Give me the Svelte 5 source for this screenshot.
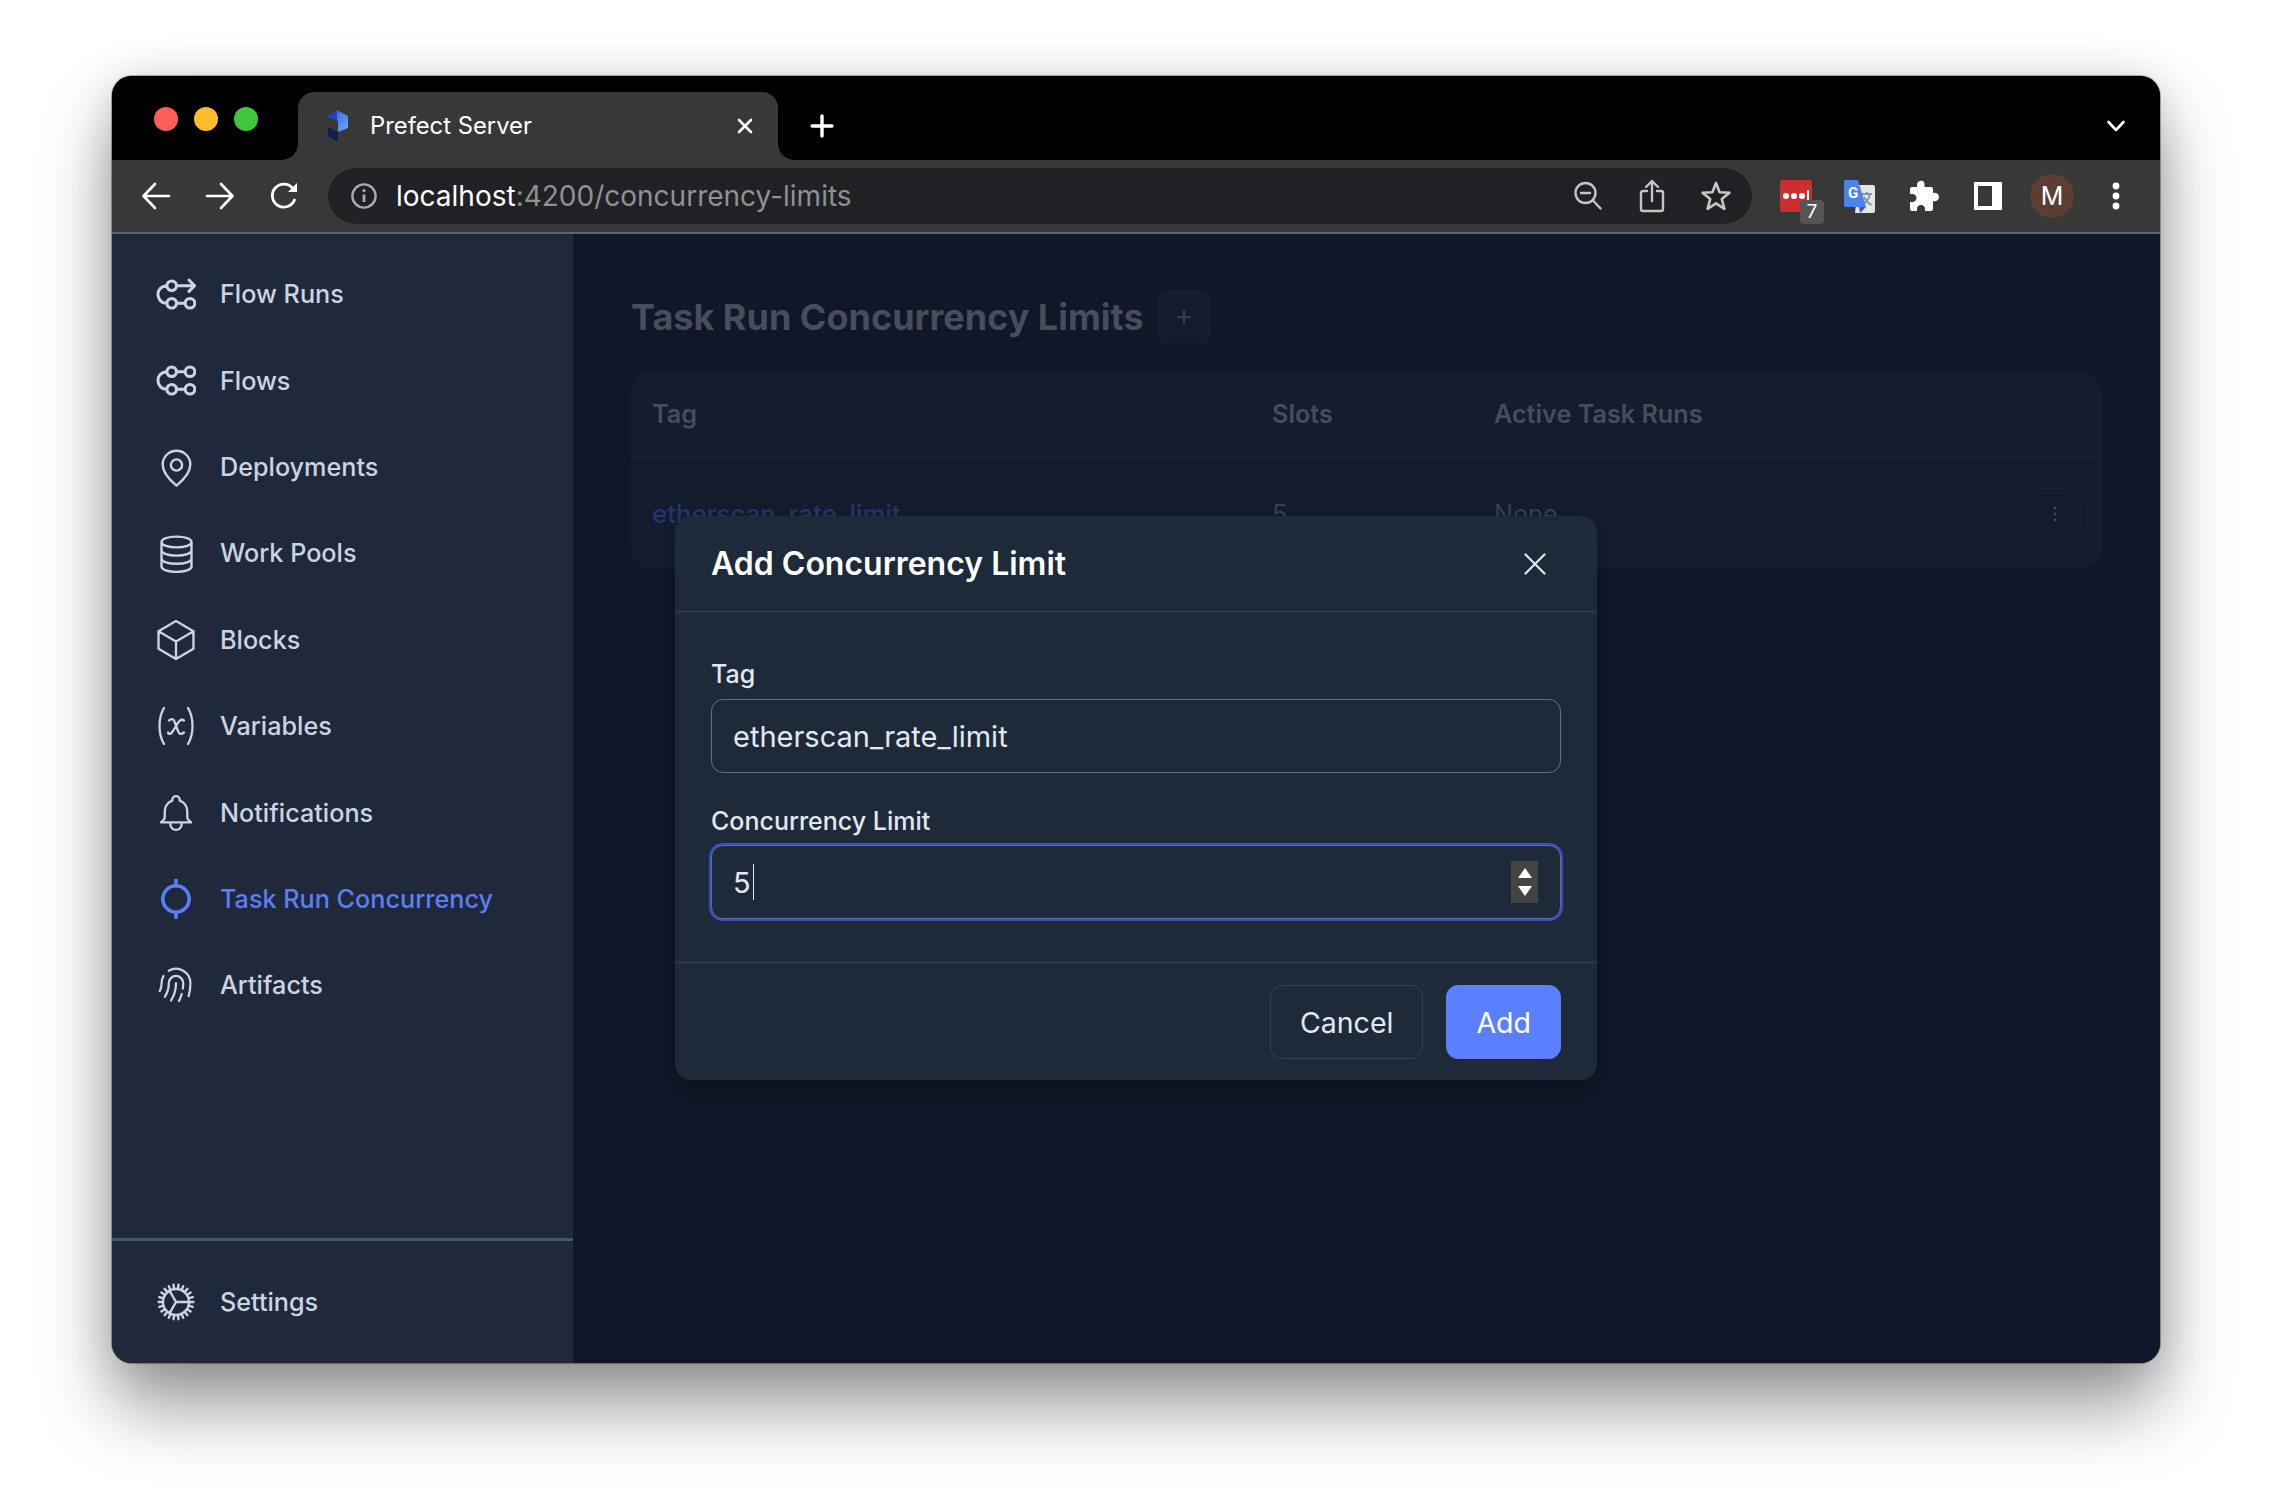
<script>
  const circ = (cx, cy, r) => `M${cx - r} ${cy}a${r} ${r} 0 1 0 ${r * 2} 0a${r} ${r} 0 1 0 ${-r * 2} 0`;

  // gear teeth around the settings icon
  let teeth = '';
  for (let i = 0; i < 22; i++) {
    const a = (i / 22) * Math.PI * 2;
    teeth += `M${20 + Math.cos(a) * 13} ${20 + Math.sin(a) * 13}L${20 + Math.cos(a) * 17.4} ${20 + Math.sin(a) * 17.4}`;
  }

  const navItems = [
    {
      label: 'Flow Runs', vb: '0 0 40 40', sw: 3,
      d: `${circ(15.7, 11.7, 4.8)}${circ(15.7, 29.3, 4.8)}${circ(34, 29.3, 4.8)}M10.900 11.700C-1 12-1 29 10.900 29.300M20.500 29.300H29.200M20.500 11.700H38M33 6l5.600 5.700-5.600 5.700`
    },
    {
      label: 'Flows', vb: '0 0 40 40', sw: 3,
      d: `${circ(15.7, 10.7, 4.8)}${circ(34, 10.7, 4.8)}${circ(15.7, 28.3, 4.8)}${circ(34, 28.3, 4.8)}M10.900 10.700C-1 11-1 28 10.900 28.300M20.500 10.700H29.200M20.500 28.300H29.200`
    },
    {
      label: 'Deployments', vb: '0 0 40 40', sw: 2.4,
      d: `M20.5 38.6C13 32.5 6.7 25.5 6.7 17.5A13.8 13.8 0 0 1 34.3 17.5C34.3 25.5 28 32.5 20.5 38.6Z${circ(20.5, 18, 5.6)}`
    },
    {
      label: 'Work Pools', vb: '0 0 40 40', sw: 2.4,
      d: `M5.5 9C5.5 5.8 12 3.6 20.5 3.6S35.5 5.8 35.5 9 29 14.4 20.5 14.4 5.5 12.2 5.5 9ZM5.5 9V33.5C5.5 36.7 12 38.9 20.5 38.9S35.5 36.7 35.5 33.5V9M5.5 17.2C5.5 20.4 12 22.6 20.5 22.6S35.5 20.4 35.5 17.2M5.5 25.4C5.5 28.6 12 30.8 20.5 30.8S35.5 28.6 35.5 25.4`
    },
    {
      label: 'Blocks', vb: '1.7 1.7 20.6 20.6', sw: 1.2,
      d: 'm21 7.5-9-5.25L3 7.5m18 0-9 5.25m9-5.25v9l-9 5.25M3 7.5l9 5.25M3 7.5v9l9 5.25m0-9v9'
    },
    {
      label: 'Variables', vb: '0 0 40 40', sw: 2.3,
      d: 'M8 2C2 12 2 28 8 38M32 2C38 12 38 28 32 38M13 14.5C16 12 18 13 19 17L22 25C23 28 25 29 28 26.5M28 14.5C25 12 22 16 20 20L17 25C15 28 13 29 12 26.5'
    },
    {
      label: 'Notifications', vb: '1.33 1.33 21.33 21.33', sw: 1.25,
      d: 'M15 17h5l-1.405-1.405A2.032 2.032 0 0118 14.158V11a6.002 6.002 0 00-4-5.659V5a2 2 0 10-4 0v.341C7.67 6.165 6 8.388 6 11v3.159c0 .538-.214 1.055-.595 1.436L4 17h5m6 0v1a3 3 0 11-6 0v-1m6 0H9'
    },
    {
      label: 'Task Run Concurrency', vb: '0 0 40 40', sw: 3.6, active: true,
      d: `${circ(20, 20, 13.2)}M20 1V7M20 33V39`
    },
    {
      label: 'Artifacts', vb: '0.9 0.9 22.2 22.2', sw: 1.25,
      d: 'M12 11c0 3.517-1.009 6.799-2.753 9.571m-3.44-2.04l.054-.09A13.916 13.916 0 008 11a4 4 0 118 0c0 1.017-.07 2.019-.203 3m-2.118 6.844A21.88 21.88 0 0015.171 17m3.839 1.132c.645-2.266.99-4.659.99-7.132A8 8 0 008 4.07M3 15.364c.64-1.319 1-2.8 1-4.364 0-1.457.39-2.823 1.07-4'
    }
  ];

  const settings = {
    label: 'Settings', vb: '0 0 40 40', sw: 2.4,
    d: `${circ(20, 20, 13)}${teeth}M20 20H33M20 20L13.5 8.7M20 20L13.5 31.3`
  };
</script>

{#snippet navRow(item)}
  <div class="nav-item" class:active={item.active}>
    <svg width="40" height="40" viewBox={item.vb} fill="none" stroke="currentColor" stroke-width={item.sw} stroke-linecap="round" stroke-linejoin="round">
      <path d={item.d} />
    </svg>
    <span>{item.label}</span>
  </div>
{/snippet}

<div class="window">
  <div class="tabstrip">
    <div class="lights">
      <i class="red"></i>
      <i class="yellow"></i>
      <i class="green"></i>
    </div>
    <div class="tab">
      <svg class="favicon" width="22" height="32" viewBox="0 0 22 32">
        <defs>
          <linearGradient id="pf" x1="0" y1="0" x2="1" y2="1">
            <stop offset="0" stop-color="#2b4fe0" />
            <stop offset="1" stop-color="#6fb0ff" />
          </linearGradient>
        </defs>
        <path d="M10 0L21 6V18L11 22V11L1 7Z" fill="url(#pf)" />
        <path d="M10 0V11L1 7Z" fill="#2440c8" />
        <path d="M1 17L11 22V32L1 26Z" fill="#10214f" />
      </svg>
      <span class="tab-title">Prefect Server</span>
      <svg class="tab-close" width="18" height="18" viewBox="0 0 18 18" stroke="#fff" stroke-width="2.6" stroke-linecap="round">
        <path d="M3 3L15 15M15 3L3 15" />
      </svg>
    </div>
    <svg class="new-tab" width="26" height="26" viewBox="0 0 26 26" stroke="#fff" stroke-width="3.4" stroke-linecap="round">
      <path d="M13 3V23M3 13H23" />
    </svg>
    <svg class="tab-menu" width="20" height="14" viewBox="0 0 20 14" fill="none" stroke="#fff" stroke-width="2.6" stroke-linecap="round" stroke-linejoin="round">
      <path d="M2.5 3L10 11L17.5 3" />
    </svg>
  </div>

  <div class="toolbar">
    <div class="tool">
      <svg width="30" height="28" viewBox="0 0 30 28" fill="none" stroke="#fff" stroke-width="2.6" stroke-linecap="round" stroke-linejoin="round">
        <path d="M28 14H3M14 2L2.5 14L14 26" />
      </svg>
    </div>
    <div class="tool">
      <svg width="30" height="28" viewBox="0 0 30 28" fill="none" stroke="#fff" stroke-width="2.6" stroke-linecap="round" stroke-linejoin="round">
        <path d="M2 14H27M16 2L27.5 14L16 26" />
      </svg>
    </div>
    <div class="tool">
      <svg width="30" height="30" viewBox="0 0 30 30" fill="none" stroke="#fff" stroke-width="2.8" stroke-linecap="round">
        <path d="M25.500 19A11.500 11.500 0 1 1 23.500 7" />
        <path d="M28 2V11H19Z" fill="#fff" stroke="none" />
      </svg>
    </div>
    <div class="omnibox">
      <svg class="info" width="28" height="28" viewBox="0 0 28 28" fill="none" stroke="#a8abae" stroke-width="2.4">
        <circle cx="14" cy="14" r="11.6" />
        <path d="M14 12.5V20" stroke-width="2.8" />
        <circle cx="14" cy="8.6" r="1.6" fill="#a8abae" stroke="none" />
      </svg>
      <div class="url"><span class="host">localhost</span>:4200/concurrency-limits</div>
      <div class="omni-icons">
        <div class="tool">
          <svg width="30" height="30" viewBox="0 0 30 30" fill="none" stroke="#c4c7c5" stroke-width="2.4" stroke-linecap="round">
            <circle cx="12.5" cy="12" r="10" />
            <path d="M8 12H17M20 19.5L27.5 27.5" />
          </svg>
        </div>
        <div class="tool">
          <svg width="26" height="34" viewBox="0 0 26 34" fill="none" stroke="#c4c7c5" stroke-width="2.4" stroke-linecap="round" stroke-linejoin="round">
            <path d="M8 12H4Q2 12 2 14V30Q2 32 4 32H22Q24 32 24 30V14Q24 12 22 12H18M13 22V2M7 8L13 2L19 8" />
          </svg>
        </div>
        <div class="tool">
          <svg width="32" height="32" viewBox="0 0 32 32" fill="none" stroke="#c4c7c5" stroke-width="2.6" stroke-linejoin="round">
            <path d="M16 3L19.6 12.3L29.5 12.8L21.8 19.1L24.4 28.8L16 23.4L7.6 28.8L10.2 19.1L2.5 12.8L12.4 12.3Z" />
          </svg>
        </div>
      </div>
    </div>
    <div class="tool ext">
      <div class="lastpass"><b></b><b></b><b></b><em></em></div>
      <div class="badge">7</div>
    </div>
    <div class="tool">
      <svg width="34" height="34" viewBox="0 0 34 34">
        <path d="M15 6H30Q32 6 32 8V32Q32 34 30 34H12Z" fill="#e3e5e7" />
        <path d="M19 15H29M24 13V15M27 15C26 20 22 24 19 26M21 18C23 22 26 25 29 26" stroke="#8a9499" stroke-width="1.8" fill="none" />
        <path d="M3 1H15L23 28H3Q1 28 1 26V3Q1 1 3 1Z" fill="#4c82ee" />
        <path d="M16 28H23L17 34Z" fill="#3557c4" />
        <text x="5" y="19" class="g">G</text>
      </svg>
    </div>
    <div class="tool">
      <svg width="30" height="32" viewBox="0 0 30 32" fill="#fff">
        <path d="M11 1C14 0 16 2 15.500 5.500V7H22Q24 7 24 9V13C27 12 30 14 30 17S27 22 24 21V29Q24 31 22 31H16V29C16 26 14 25 12 25S8 26 8 29V31H3Q1 31 1 29V22H3C6 22 7.500 20 7.500 18S6 14 3 14H1V9Q1 7 3 7H8V5C8 3 9 1.500 11 1Z" />
      </svg>
    </div>
    <div class="tool">
      <div class="panel"></div>
    </div>
    <div class="tool">
      <div class="avatar">M</div>
    </div>
    <div class="tool">
      <svg width="8" height="28" viewBox="0 0 8 28" fill="#fff">
        <circle cx="4" cy="4" r="3.4" />
        <circle cx="4" cy="14" r="3.4" />
        <circle cx="4" cy="24" r="3.4" />
      </svg>
    </div>
  </div>

  <div class="content">
    <aside class="sidebar">
      <nav class="nav">
        {#each navItems as item}
          {@render navRow(item)}
        {/each}
      </nav>
      <div class="nav-bottom">
        {@render navRow(settings)}
      </div>
    </aside>

    <main class="main">
      <header class="page-head">
        <h1>Task Run Concurrency Limits</h1>
        <div class="ghost-btn plus">
          <svg width="16" height="16" viewBox="0 0 16 16" stroke="#3e4656" stroke-width="1.6">
            <path d="M8 1V15M1 8H15" />
          </svg>
        </div>
      </header>
      <section class="table">
        <div class="row head">
          <div>Tag</div>
          <div>Slots</div>
          <div>Active Task Runs</div>
        </div>
        <div class="row body">
          <div class="link">etherscan_rate_limit</div>
          <div>5</div>
          <div>None</div>
          <div class="ghost-btn kebab">
            <svg width="4" height="16" viewBox="0 0 4 16" fill="#414857">
              <circle cx="2" cy="2" r="1.4" />
              <circle cx="2" cy="8" r="1.4" />
              <circle cx="2" cy="14" r="1.4" />
            </svg>
          </div>
        </div>
      </section>
    </main>

    <div class="modal">
      <div class="modal-head">
        <h2>Add Concurrency Limit</h2>
        <svg width="22" height="24" viewBox="0 0 22 24" stroke="#e2e8f0" stroke-width="2.2" stroke-linecap="round">
          <path d="M1.500 2.500L20.500 21.500M20.500 2.500L1.500 21.500" />
        </svg>
      </div>
      <div class="modal-body">
        <div class="field-label">Tag</div>
        <input class="input" type="text" readonly value="etherscan_rate_limit" />
        <div class="field-label second">Concurrency Limit</div>
        <div class="input focused">
          <span>5</span><span class="caret"></span>
          <div class="spinner">
            <svg width="14" height="10" viewBox="0 0 14 10" fill="#fff"><path d="M7 0L14 10H0Z" /></svg>
            <svg width="14" height="10" viewBox="0 0 14 10" fill="#fff"><path d="M0 0H14L7 10Z" /></svg>
          </div>
        </div>
      </div>
      <div class="modal-foot">
        <button class="btn">Cancel</button>
        <button class="btn primary">Add</button>
      </div>
    </div>
  </div>
</div>

<style>
  :global(body) {
    background: #fff;
    font-family: Inter, "Liberation Sans", sans-serif;
  }

  :global(#app) {
    padding-bottom: 149px;
  }

  .window {
    position: relative;
    box-sizing: border-box;
    width: 2048px;
    height: 1287px;
    margin: 76px 0 0 112px;
    border-radius: 20px;
    overflow: hidden;
    display: flex;
    flex-direction: column;
    background: #000;
    box-shadow: 0 0 0 1px rgba(0, 0, 0, 0.3), 0 44px 70px rgba(0, 0, 0, 0.4), 0 0 44px rgba(0, 0, 0, 0.14);
  }

  .tabstrip {
    height: 84px;
    box-sizing: border-box;
    padding: 16px 0 0 42px;
    display: flex;
    align-items: flex-start;
    background: #000;
  }

  .lights {
    display: flex;
    gap: 16px;
    margin-top: 15px;
  }

  .lights i {
    width: 24px;
    height: 24px;
    border-radius: 50%;
  }

  .red { background: #fc5f57; }
  .yellow { background: #fdbc2e; }
  .green { background: #3fc83f; }

  .tab {
    position: relative;
    width: 480px;
    height: 68px;
    margin-left: 40px;
    box-sizing: border-box;
    padding: 0 24px 0 29px;
    display: flex;
    align-items: center;
    background: #383838;
    border-radius: 16px 16px 0 0;
  }

  .tab::before,
  .tab::after {
    content: '';
    position: absolute;
    bottom: 0;
    width: 16px;
    height: 16px;
  }

  .tab::before {
    left: -16px;
    background: radial-gradient(circle at 0 0, transparent 15.500px, #383838 16px);
  }

  .tab::after {
    right: -16px;
    background: radial-gradient(circle at 100% 0, transparent 15.500px, #383838 16px);
  }

  .favicon {
    flex: none;
  }

  .tab-title {
    margin: -1px 0 0 21px;
    color: #fff;
    font-size: 23.800px;
  }

  .tab-close {
    margin-left: auto;
  }

  .new-tab {
    margin: 21px 0 0 31px;
  }

  .tab-menu {
    margin: 27px 34px 0 auto;
  }

  .toolbar {
    height: 72px;
    box-sizing: border-box;
    padding: 0 12px;
    display: flex;
    align-items: center;
    background: #383838;
  }

  .tool {
    position: relative;
    flex: none;
    width: 64px;
    height: 56px;
    display: flex;
    align-items: center;
    justify-content: center;
  }

  .omnibox {
    flex: none;
    width: 1424px;
    height: 56px;
    margin: 0 12px;
    box-sizing: border-box;
    padding: 0 4px 0 22px;
    display: flex;
    align-items: center;
    border-radius: 28px;
    background: #202124;
  }

  .url {
    margin-left: 18px;
    color: #8f9193;
    font-size: 28px;
  }

  .host {
    color: #fff;
  }

  .omni-icons {
    margin-left: auto;
    display: flex;
  }

  .lastpass {
    position: absolute;
    left: 16px;
    top: 12px;
    width: 32px;
    height: 32px;
    box-sizing: border-box;
    padding-left: 3px;
    display: flex;
    align-items: center;
    gap: 2px;
    border-radius: 3px;
    background: #cb2f2f;
  }

  .lastpass b {
    width: 6px;
    height: 6px;
    border-radius: 50%;
    background: #fff;
  }

  .lastpass em {
    width: 2px;
    height: 12px;
    background: #fff;
  }

  .badge {
    position: absolute;
    left: 36px;
    top: 32px;
    width: 24px;
    height: 24px;
    border-radius: 4px;
    background: #555;
    color: #fff;
    font-size: 19px;
    line-height: 24px;
    text-align: center;
  }

  .g {
    fill: #fff;
    font: 700 15px Roboto, sans-serif;
  }

  .panel {
    width: 28px;
    height: 28px;
    box-sizing: border-box;
    border: 4px solid #fff;
    border-right-width: 10px;
    background: #383838;
  }

  .avatar {
    width: 44px;
    height: 44px;
    border-radius: 50%;
    background: #5d3c32;
    color: #fff;
    font-size: 25px;
    line-height: 44px;
    text-align: center;
  }

  .content {
    position: relative;
    flex: 1;
    min-height: 0;
    display: flex;
    border-top: 2px solid #5f6266;
  }

  .sidebar {
    flex: none;
    width: 461px;
    display: flex;
    flex-direction: column;
    background: #20283b;
  }

  .nav {
    flex: 1;
    padding-top: 17px;
  }

  .nav-bottom {
    border-top: 3px solid #475569;
    padding: 18px 0 18px;
  }

  .nav-item {
    height: 86.400px;
    box-sizing: border-box;
    padding-left: 44px;
    display: flex;
    align-items: center;
    gap: 24px;
    color: #cbd5e1;
    font-size: 25.200px;
    font-weight: 500;
  }

  .nav-item svg {
    flex: none;
  }

  .nav-item.active {
    color: #5a7ff5;
  }

  .main {
    flex: 1;
    min-width: 0;
    box-sizing: border-box;
    padding: 57px 58px 0;
    background: #101729;
  }

  .page-head {
    display: flex;
    align-items: center;
    gap: 14px;
  }

  h1 {
    margin: 0;
    color: #474d5c;
    font-size: 36px;
    font-weight: 700;
  }

  .ghost-btn {
    box-sizing: border-box;
    display: flex;
    align-items: center;
    justify-content: center;
    border: 1px solid #1a2436;
    border-radius: 10px;
    background: #131b2d;
  }

  .plus {
    width: 52px;
    height: 52px;
  }

  .table {
    margin-top: 28px;
    border-radius: 22px;
    background: #141c2e;
  }

  .row {
    display: grid;
    grid-template-columns: 620px 222px 1fr auto;
    align-items: center;
    padding: 0 21px 0 21px;
    font-size: 25.200px;
  }

  .row.head {
    height: 86px;
    border-bottom: 1px solid #1a2738;
    color: #474d5c;
    font-weight: 600;
  }

  .row.body {
    height: 111px;
    color: #3a4150;
  }

  .link {
    color: #25356d;
    font-size: 25.800px;
    font-weight: 500;
  }

  .kebab {
    width: 52px;
    height: 52px;
    margin-top: 1px;
    border-radius: 14px;
  }

  .modal {
    position: absolute;
    top: 282px;
    left: 50%;
    transform: translateX(-50%);
    width: 922px;
    border-radius: 16px;
    background: #1e2939;
    box-shadow: 0 10px 30px rgba(0, 0, 0, 0.25);
  }

  .modal-head {
    height: 96px;
    box-sizing: border-box;
    padding: 0 51px 0 36px;
    display: flex;
    align-items: center;
    justify-content: space-between;
    border-bottom: 1.500px solid #334155;
  }

  h2 {
    margin: 0;
    color: #fff;
    font-size: 32px;
    font-weight: 600;
  }

  .modal-body {
    padding: 45px 36px 43px;
  }

  .field-label {
    height: 34px;
    margin-bottom: 8px;
    color: #e2e8f0;
    font-size: 25px;
    font-weight: 500;
    line-height: 34px;
  }

  .field-label.second {
    margin: 31px 0 7px;
  }

  .input {
    display: flex;
    align-items: center;
    position: relative;
    width: 100%;
    height: 74px;
    box-sizing: border-box;
    padding: 0 21px;
    border: 1.500px solid #667080;
    border-radius: 12px;
    outline: none;
    background: #1e2939;
    color: #e2e8f0;
    font-family: inherit;
    font-size: 29px;
  }

  .input.focused {
    box-shadow: 0 0 0 2px #2f4fcf;
  }

  .caret {
    width: 1.500px;
    height: 36px;
    margin-left: 2px;
    background: #e2e8f0;
  }

  .spinner {
    position: absolute;
    right: 22px;
    top: 15px;
    width: 27px;
    height: 42px;
    display: flex;
    flex-direction: column;
    align-items: center;
    justify-content: center;
    gap: 8px;
    background: #444;
  }

  .modal-foot {
    padding: 22px 36px 21px;
    display: flex;
    justify-content: flex-end;
    gap: 23px;
    border-top: 1.500px solid #334155;
  }

  .btn {
    height: 74px;
    box-sizing: border-box;
    padding: 0 29px;
    border: 1px solid #334155;
    border-radius: 12px;
    background: #1e2939;
    color: #e2e8f0;
    font-family: inherit;
    font-size: 28.500px;
  }

  .btn.primary {
    border-color: #5b80ff;
    background: #5b80ff;
    color: #fff;
  }
</style>
